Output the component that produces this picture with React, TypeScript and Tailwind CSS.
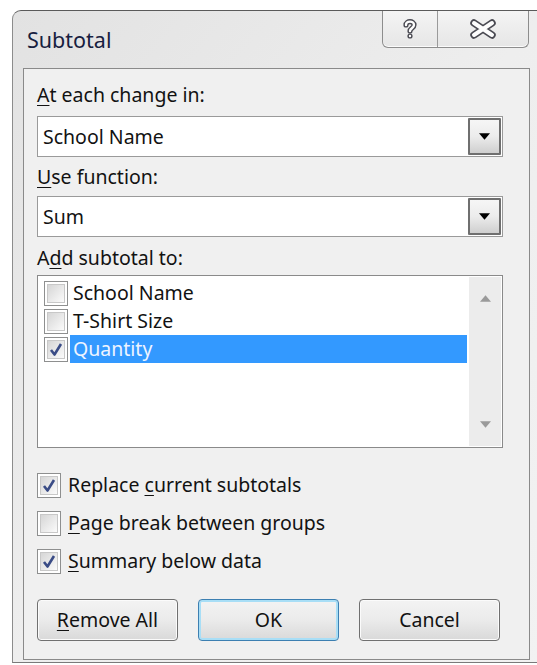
import type { ReactNode } from 'react';

const font = { fontFamily: '"Noto Sans", "Open Sans", Arial, sans-serif' };

function Check() {
  return (
    <svg width="17" height="17" viewBox="0 0 16 16" className="block">
      <path d="M3 8.5 L6.5 13 L13 2.5" fill="none" stroke="#3a4c86" strokeWidth="2.6" strokeLinejoin="round" />
    </svg>
  );
}

function CheckBox({ checked }: { checked?: boolean }) {
  return (
    <div className="w-[24px] h-[25px] shrink-0 border border-[#8e8f8f] bg-white p-[2px]">
      <div className="w-full h-full border border-[#c8c8c8] bg-gradient-to-br from-[#d6d6d6] to-[#fbfbfb] flex items-center justify-center">
        {checked && <Check />}
      </div>
    </div>
  );
}

function Arrow({ up, color = '#000', w = 12 }: { up?: boolean; color?: string; w?: number }) {
  return (
    <svg width={w} height="7" viewBox="0 0 12 7" className="block">
      <path d={up ? 'M0 7 L6 0 L12 7 Z' : 'M0 0 L12 0 L6 7 Z'} fill={color} />
    </svg>
  );
}

function Combo({ value }: { value: string }) {
  return (
    <div className="w-[466px] h-[41px] border border-[#9a9a9a] bg-white flex items-center">
      <span className="flex-1 pl-[5px] text-[19.5px] leading-[24px]">{value}</span>
      <div className="w-[33px] h-[37px] mr-[1px] border-2 border-[#6f6f6f] rounded-[1px] bg-gradient-to-b from-[#f6f6f6] via-[#ececec] to-[#cfcfcf] flex items-center justify-center">
        <Arrow w={11} />
      </div>
    </div>
  );
}

function Label({ children, className = '' }: { children: ReactNode; className?: string }) {
  return <div className={`text-[19.5px] leading-[24px] ${className}`}>{children}</div>;
}

function Btn({ children, primary }: { children: ReactNode; primary?: boolean }) {
  return (
    <button
      className={`w-[141px] h-[42px] rounded-[4px] border text-[19.5px] leading-[24px] ${
        primary ? 'border-[#3c7fb1] shadow-[inset_0_0_0_2px_#a8def6]' : 'border-[#707070] shadow-[inset_0_0_0_1px_#fbfbfb]'
      } bg-gradient-to-b from-[#f3f3f3] via-[#ebebeb] to-[#d9d9d9]`}
    >
      {children}
    </button>
  );
}

const fields = [
  { name: 'School Name', checked: false },
  { name: 'T-Shirt Size', checked: false },
  { name: 'Quantity', checked: true },
];

export default function App() {
  return (
    <div className="w-[537px] h-[665px] bg-white overflow-hidden text-[#121212]" style={font}>
      <div className="ml-[12px] mt-[10px] w-[532px] h-[653px] rounded-tl-[9px] border-t border-l border-b border-t-[#5a5a5a] border-l-[#8c8c8c] border-b-[#7a7a7a] bg-gradient-to-br from-[#e2e2e2] via-[#eeeeee] to-[#f2f2f2] flex flex-col">
        {/* title bar */}
        <div className="h-[57px] flex items-start">
          <div className="pl-[14px] pt-[15px] text-[21.5px] leading-[28px] text-[#17203f]">Subtotal</div>
          <div className="ml-auto mr-[15px] flex h-[37px] border border-t-0 border-[#8d8d8d] rounded-b-[6px] bg-gradient-to-b from-[#f4f4f4] to-[#e6e6e6] shadow-[inset_0_-1px_0_#fbfbfb]">
            <div className="w-[55px] flex items-center justify-center border-r border-[#9a9a9a]">
              <svg width="16" height="22" viewBox="0 0 16 22">
                <g fill="none" strokeLinecap="round">
                  <path d="M4 7 C4 2.5 12 2.5 12 7 C12 10 8 10.5 8 13" stroke="#4a4a52" strokeWidth="5.2" />
                  <path d="M4 7 C4 2.5 12 2.5 12 7 C12 10 8 10.5 8 13" stroke="#fdfdfd" strokeWidth="2.4" />
                </g>
                <circle cx="8" cy="18" r="2.6" fill="#4a4a52" />
                <circle cx="8" cy="18" r="1.2" fill="#fdfdfd" />
              </svg>
            </div>
            <div className="w-[90px] flex items-center justify-center">
              <svg width="28" height="20" viewBox="0 0 28 20">
                <g strokeLinecap="round">
                  <path d="M5 4 L23 16 M23 4 L5 16" stroke="#4a4a52" strokeWidth="7.5" />
                  <path d="M5 4 L23 16 M23 4 L5 16" stroke="#fdfdfd" strokeWidth="4" />
                </g>
              </svg>
            </div>
          </div>
        </div>

        {/* client area */}
        <div className="ml-[10px] w-[507px] h-[592px] border border-[#8a8a8a] bg-[#f0f0f0] pl-[13px] flex flex-col">
          <Label className="mt-[14px]">
            <span className="underline underline-offset-[3px]">A</span>t each change in:
          </Label>
          <div className="mt-[9px]">
            <Combo value="School Name" />
          </div>
          <Label className="mt-[8px]">
            <span className="underline underline-offset-[3px]">U</span>se function:
          </Label>
          <div className="mt-[7px]">
            <Combo value="Sum" />
          </div>
          <Label className="mt-[9px]">
            A<span className="underline underline-offset-[3px]">d</span>d subtotal to:
          </Label>

          <div className="mt-[5px] w-[466px] h-[173px] border border-[#8a8a8a] bg-white p-[1px] flex">
            <div className="flex-1 pl-[5px] pt-[2px]">
              {fields.map((f) => (
                <div key={f.name} className="h-[28px] flex items-center">
                  <CheckBox checked={f.checked} />
                  <div
                    className={`ml-[2px] w-[397px] h-[28px] pl-[3px] flex items-center text-[19.5px] leading-[24px] ${
                      f.checked ? 'bg-[#3399ff] text-[#eef4ff]' : ''
                    }`}
                  >
                    {f.name}
                  </div>
                </div>
              ))}
            </div>
            <div className="w-[32px] bg-[#ececec] flex flex-col items-center justify-between py-[18px]">
              <Arrow up color="#9a9a9a" w={11} />
              <Arrow color="#9a9a9a" w={11} />
            </div>
          </div>

          <div className="mt-[24px] flex flex-col gap-[12px]">
            <div className="h-[26px] flex items-center gap-[7px]">
              <CheckBox checked />
              <span className="text-[19.5px] leading-[24px]">
                Replace <span className="underline underline-offset-[3px]">c</span>urrent subtotals
              </span>
            </div>
            <div className="h-[26px] flex items-center gap-[7px]">
              <CheckBox />
              <span className="text-[19.5px] leading-[24px]">
                <span className="underline underline-offset-[3px]">P</span>age break between groups
              </span>
            </div>
            <div className="h-[26px] flex items-center gap-[7px]">
              <CheckBox checked />
              <span className="text-[19.5px] leading-[24px]">
                <span className="underline underline-offset-[3px]">S</span>ummary below data
              </span>
            </div>
          </div>

          <div className="mt-[25px] flex gap-[20px]">
            <Btn>
              <span className="underline underline-offset-[3px]">R</span>emove All
            </Btn>
            <Btn primary>OK</Btn>
            <Btn>Cancel</Btn>
          </div>
        </div>
      </div>
    </div>
  );
}
